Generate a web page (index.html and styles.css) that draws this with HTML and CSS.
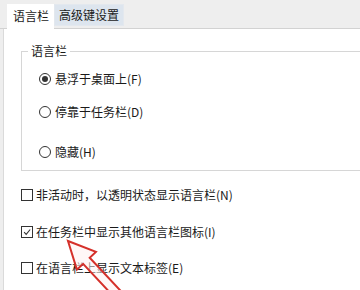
FILE: index.html
```html
<!DOCTYPE html>
<html lang="zh-CN">
<head>
<meta charset="utf-8">
<link rel="stylesheet" href="styles.css">
</head>
<body>
<div class="window">
  <div class="tabs">
    <div class="tab active">语言栏</div>
    <div class="tab">高级键设置</div>
  </div>
  <div class="panel">
    <fieldset class="group">
      <legend class="legend">语言栏</legend>
      <div class="opt opt1"><span class="radio checked"></span><span>悬浮于桌面上(F)</span></div>
      <div class="opt opt2"><span class="radio"></span><span>停靠于任务栏(D)</span></div>
      <div class="opt opt3"><span class="radio"></span><span>隐藏(H)</span></div>
    </fieldset>
    <div class="chk chk1"><span class="box"></span><span>非活动时，以透明状态显示语言栏(N)</span></div>
    <div class="chk chk2"><span class="box"><svg class="tick" viewBox="0 0 12 12"><polyline points="2.5,6.2 5,8.8 9.8,3" /></svg></span><span>在任务栏中显示其他语言栏图标(I)</span></div>
    <div class="chk chk3"><span class="box"></span><span>在语言栏上显示文本标签(E)</span></div>
  </div>
  <svg class="arrow" width="360" height="290" viewBox="0 0 360 290">
    <g transform="translate(68,241) rotate(47)">
      <polygon points="0,0 27,-13 27,-4.5 95,-4.5 95,4.5 27,4.5 27,13" />
    </g>
  </svg>
</div>
</body>
</html>
```
FILE: styles.css
```css
html, body {
  margin: 0;
  padding: 0;
}
body {
  background: #eeeeee;
  font-family: "Noto Sans CJK SC", "Microsoft YaHei", sans-serif;
  font-size: 12px;
  color: #1a1a1a;
  width: 360px;
  height: 290px;
  overflow: hidden;
}
.window {
  position: relative;
  width: 360px;
  height: 290px;
  display: flex;
  flex-direction: column;
}
.tabs {
  height: 28px;
  display: flex;
  align-items: flex-end;
  padding-left: 7px;
  border-bottom: 1px solid #d2d2d2;
  box-sizing: content-box;
}
.tab {
  height: 20px;
  line-height: 20px;
  padding: 0 4px;
  margin-bottom: 2px;
  background: #dde5ee;
  border: 1px solid #e3e8ee;
  white-space: nowrap;
}
.tab.active {
  background: #ffffff;
  border: none;
  height: 25px;
  line-height: 24px;
  margin-bottom: -1px;
  padding: 0 5px 0 6px;
  position: relative;
}
.panel {
  flex: 1;
  margin-left: 3px;
  background: #ffffff;
  border-left: 1px solid #dadada;
  padding: 15px 0 0 17px;
  display: flex;
  flex-direction: column;
}
.group {
  margin: 0;
  padding: 0 0 10px 17px;
  border: 1px solid #d6d6d6;
  border-right: none;
  min-width: 0;
}
.legend {
  padding: 0 3px;
  margin-left: -11px;
  line-height: 14px;
}
.opt, .chk {
  display: flex;
  align-items: center;
  height: 16px;
  line-height: 16px;
  white-space: nowrap;
}
.opt1 { margin-top: 13px; }
.opt2 { margin-top: 17px; }
.opt3 { margin-top: 24px; }
.radio {
  width: 12px;
  height: 12px;
  box-sizing: border-box;
  border: 1px solid #333333;
  border-radius: 50%;
  margin-right: 4px;
  display: flex;
  align-items: center;
  justify-content: center;
}
.radio.checked::after {
  content: "";
  width: 6px;
  height: 6px;
  border-radius: 50%;
  background: #333333;
}
.chk { margin-top: 20px; }
.chk1 { margin-top: 16px; }
.chk2 { margin-top: 21px; }
.box {
  width: 12px;
  height: 12px;
  box-sizing: border-box;
  border: 1px solid #333333;
  margin-right: 3px;
  display: flex;
}
.tick {
  width: 10px;
  height: 10px;
}
.tick polyline {
  fill: none;
  stroke: #333333;
  stroke-width: 1.3;
}
.arrow {
  position: absolute;
  left: 0;
  top: 0;
  pointer-events: none;
}
.arrow polygon {
  fill: rgba(255, 240, 240, 0.55);
  stroke: #d5302a;
  stroke-width: 2;
  stroke-linejoin: miter;
}
```
